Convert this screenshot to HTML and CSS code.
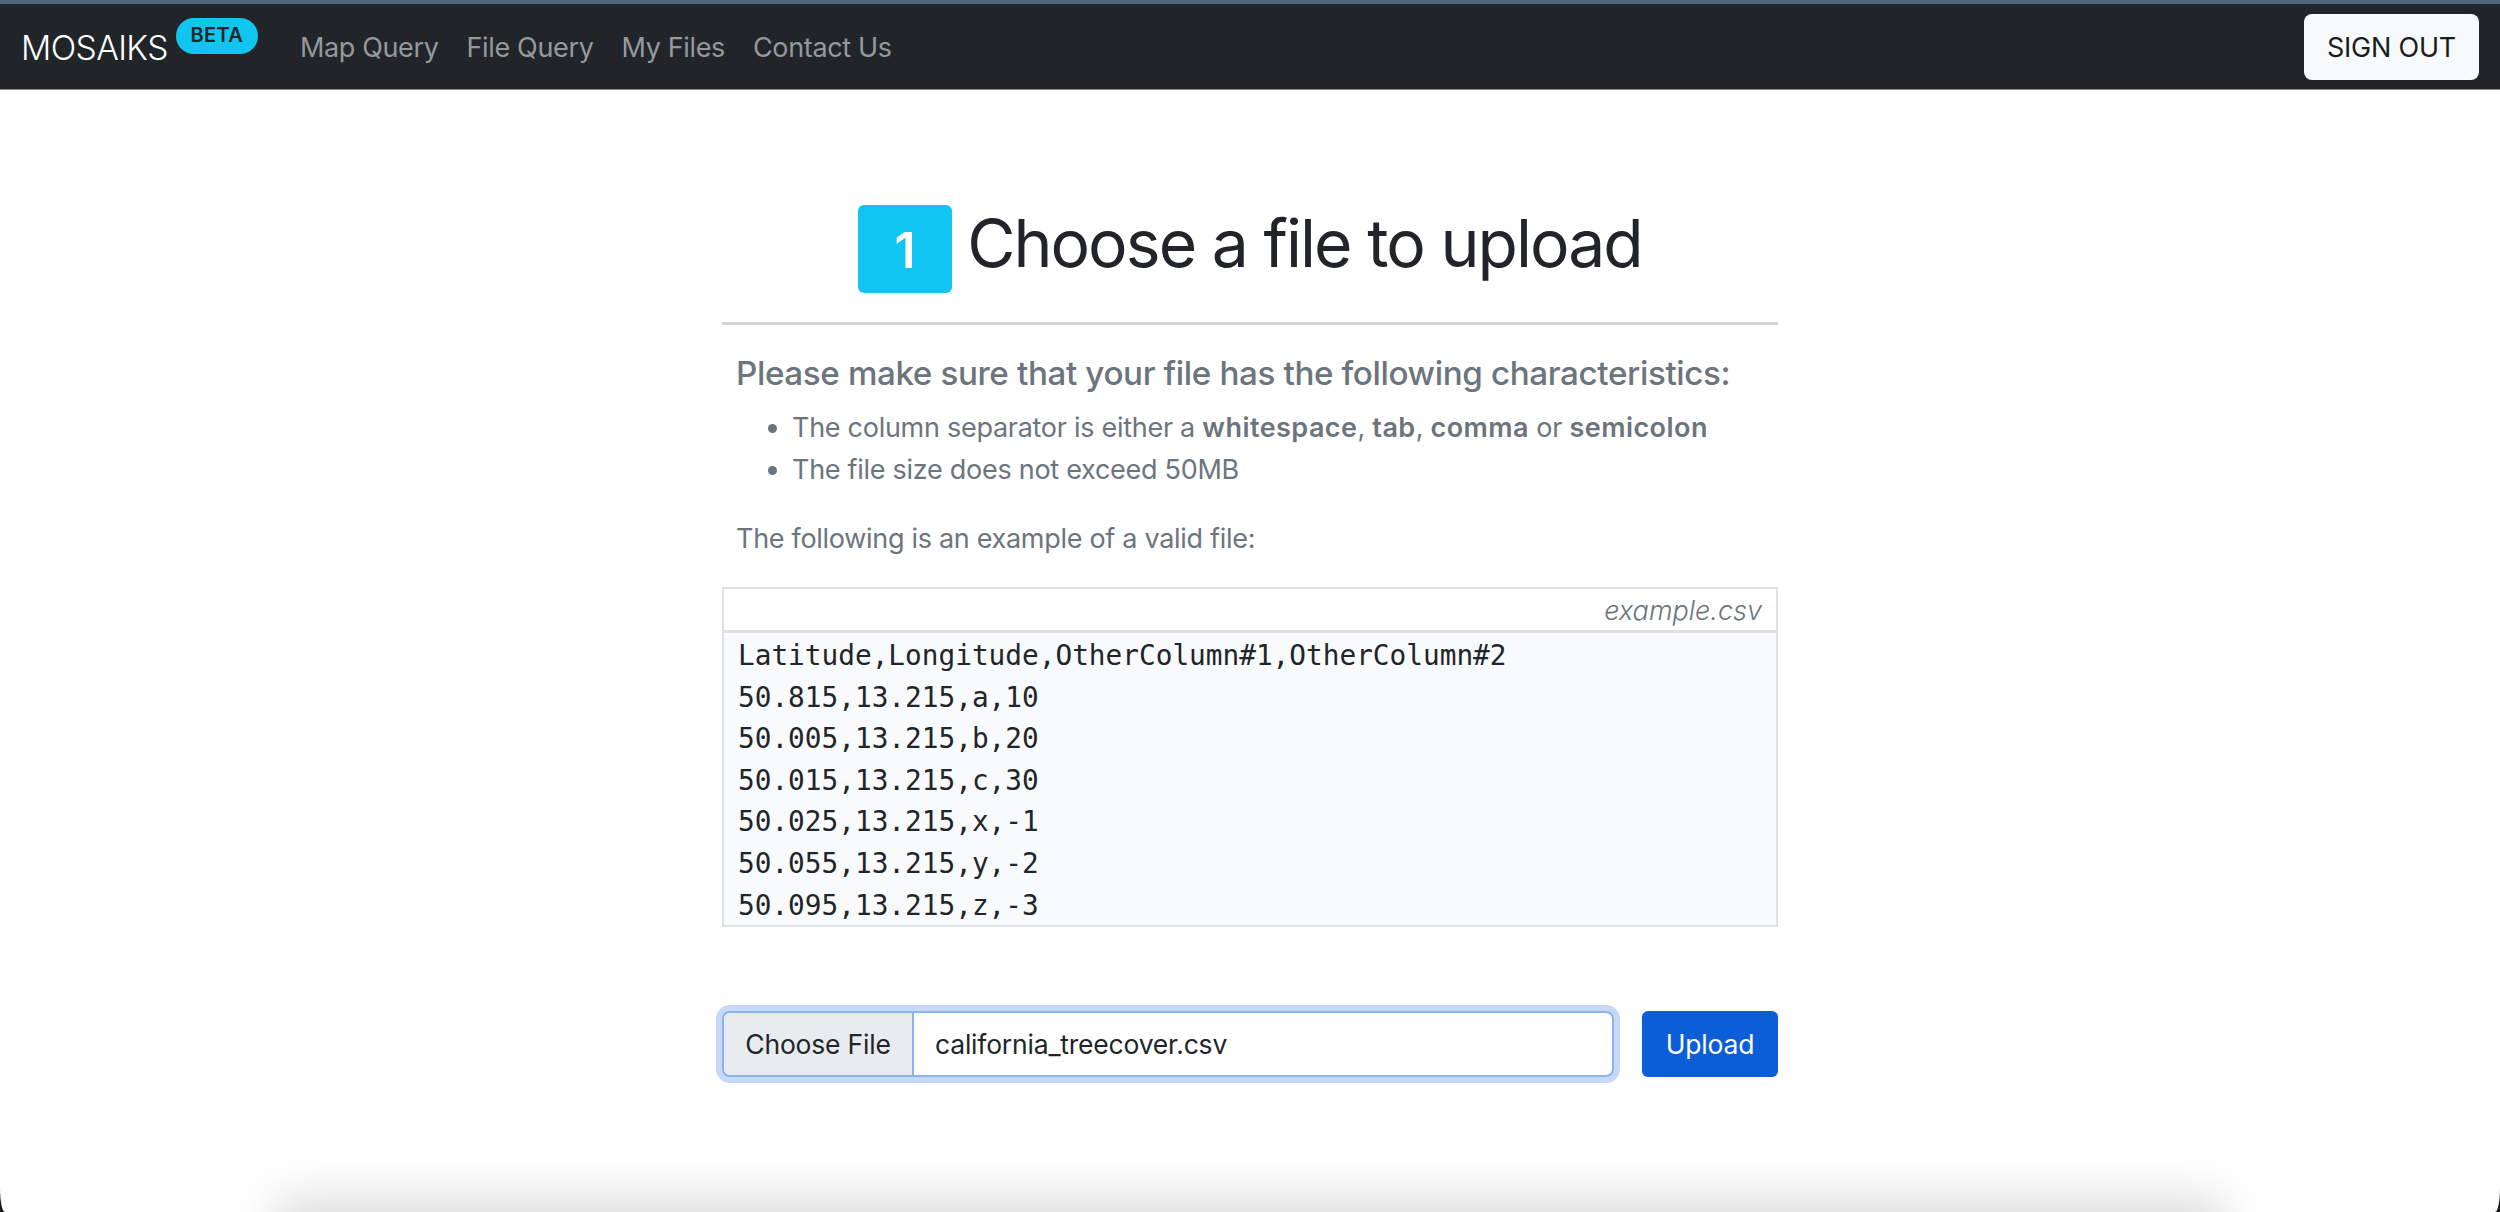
FILE: index.html
```html
<!DOCTYPE html>
<html lang="en">
<head>
<meta charset="utf-8">
<title>MOSAIKS - File Query</title>
<link rel="stylesheet" href="styles.css">
</head>
<body>
<div class="window">
  <nav class="navbar">
    <a class="brand">MOSAIKS</a>
    <span class="beta">BETA</span>
    <ul class="nav-links">
      <li>Map Query</li>
      <li>File Query</li>
      <li>My Files</li>
      <li>Contact Us</li>
    </ul>
    <button class="sign-out">SIGN OUT</button>
  </nav>
  <main class="content">
    <h1 class="title"><span class="step">1</span><span class="title-text">Choose a file to upload</span></h1>
    <hr class="rule">
    <section class="info">
      <h5 class="info-title">Please make sure that your file has the following characteristics:</h5>
      <ul class="info-list">
        <li>The column separator is either a <b>whitespace</b>, <b>tab</b>, <b>comma</b> or <b>semicolon</b></li>
        <li>The file size does not exceed 50MB</li>
      </ul>
      <p class="info-note">The following is an example of a valid file:</p>
    </section>
    <figure class="example">
      <figcaption class="example-name">example.csv</figcaption>
      <pre class="example-code">Latitude,Longitude,OtherColumn#1,OtherColumn#2
50.815,13.215,a,10
50.005,13.215,b,20
50.015,13.215,c,30
50.025,13.215,x,-1
50.055,13.215,y,-2
50.095,13.215,z,-3</pre>
    </figure>
    <form class="upload">
      <div class="file-input">
        <span class="file-button">Choose File</span>
        <span class="file-name">california_treecover.csv</span>
      </div>
      <button type="button" class="upload-button">Upload</button>
    </form>
  </main>
  <div class="bottom-shadow"></div>
</div>
</body>
</html>
```
FILE: styles.css
```css
* { box-sizing: border-box; }
html, body { margin: 0; height: 100%; background: #1a1a1a; overflow: hidden; }
body { font-family: Inter, "Liberation Sans", sans-serif; color: #212529; }
.window {
  position: relative;
  height: 1212px;
  background: #fff;
  overflow: hidden;
  border-radius: 0 0 5px 5px / 0 0 24px 24px;
}
.navbar {
  display: flex;
  align-items: center;
  height: 90px;
  padding: 0 21px 0 21px;
  background: #212529;
  border-top: 4px solid #4f6776;
  border-bottom: 1px solid #8a8d90;
}
.brand { color: #fff; font-size: 33.6px; font-weight: 300; letter-spacing: -0.6px; margin-top: 2px; }
.beta {
  align-self: flex-start;
  margin: 14px 0 0 8px;
  width: 82px;
  height: 36px;
  line-height: 35px;
  text-align: center;
  border-radius: 18px;
  background: #10c5f0;
  color: #212529;
  font-size: 20px;
  font-weight: 600;
  letter-spacing: 0.4px;
}
.nav-links {
  display: flex;
  gap: 28px;
  list-style: none;
  margin: 2px 0 0 42px;
  padding: 0;
  color: #96999c;
  font-size: 27px;
  font-weight: 400;
  letter-spacing: -0.35px;
}
.sign-out {
  margin-left: auto;
  margin-top: 1px;
  width: 175px;
  height: 66px;
  border: 0;
  border-radius: 8px;
  background: #f8f9fa;
  color: #1a1d20;
  font: 400 27px Inter, "Liberation Sans", sans-serif;
  letter-spacing: -0.2px;
}
.content { width: 1056px; margin: 0 auto; padding-top: 115px; }
.title {
  display: flex;
  justify-content: center;
  align-items: center;
  gap: 15px;
  height: 88px;
  margin: 0;
  font-size: 66px;
  font-weight: 400;
  letter-spacing: -1.95px;
  color: #212529;
}
.title-text { margin-bottom: 13px; }
.step {
  width: 94px;
  height: 88px;
  border-radius: 6px;
  background: #10c5f0;
  color: #fff;
  font-size: 50px;
  font-weight: 600;
  letter-spacing: 0;
  line-height: 90px;
  text-align: center;
}
.rule { height: 3px; margin: 29px 0 0; border: 0; background: #d2d4d6; }
.info { padding: 0 14px; color: #6c757d; }
.info-title { margin: 26px 0 0; font-size: 33.2px; font-weight: 500; line-height: 44px; letter-spacing: -0.38px; }
.info-list { margin: 12px 0 0; padding-left: 56px; font-size: 27px; line-height: 42px; letter-spacing: -0.28px; }
.info-list b { font-weight: 600; letter-spacing: 0.45px; }
.info-note { margin: 27px 0 0; font-size: 27px; line-height: 42px; letter-spacing: -0.3px; }
.example { margin: 27px 0 0; border: 2px solid #dee2e6; }
.example-name {
  height: 44px;
  padding-right: 14px;
  text-align: right;
  font-size: 27px;
  font-style: italic;
  font-weight: 300;
  line-height: 44px;
  color: #6c757d;
  border-bottom: 3px solid #dee2e6;
}
.example-code {
  height: 292px;
  margin: 0;
  padding: 2px 14px 0;
  background: #f9fafb;
  color: #212529;
  font-family: "DejaVu Sans Mono", monospace;
  font-size: 27.75px;
  line-height: 41.6px;
  overflow: hidden;
}
.upload { display: flex; gap: 28px; margin-top: 84px; }
.file-input {
  display: flex;
  flex: 1;
  height: 66px;
  background: #fff;
  border: 2px solid #8db4ee;
  border-radius: 8px;
  box-shadow: 0 0 0 6px #c6daf8;
  font-size: 26.5px;
  line-height: 62px;
  overflow: hidden;
  letter-spacing: -0.2px;
}
.file-button { width: 190px; text-align: center; background: #e9ecef; border-right: 2px solid #8db4ee; }
.file-name { padding-left: 21px; }
.upload-button {
  width: 136px;
  height: 66px;
  border: 0;
  border-radius: 6px;
  background: #0b5ed7;
  color: #fff;
  font: 400 26.5px Inter, "Liberation Sans", sans-serif;
  letter-spacing: -0.2px;
}
.bottom-shadow {
  position: absolute;
  left: 290px;
  right: 290px;
  bottom: -40px;
  height: 40px;
  box-shadow: 0 0 46px 14px rgba(0, 0, 0, 0.14);
}
```
